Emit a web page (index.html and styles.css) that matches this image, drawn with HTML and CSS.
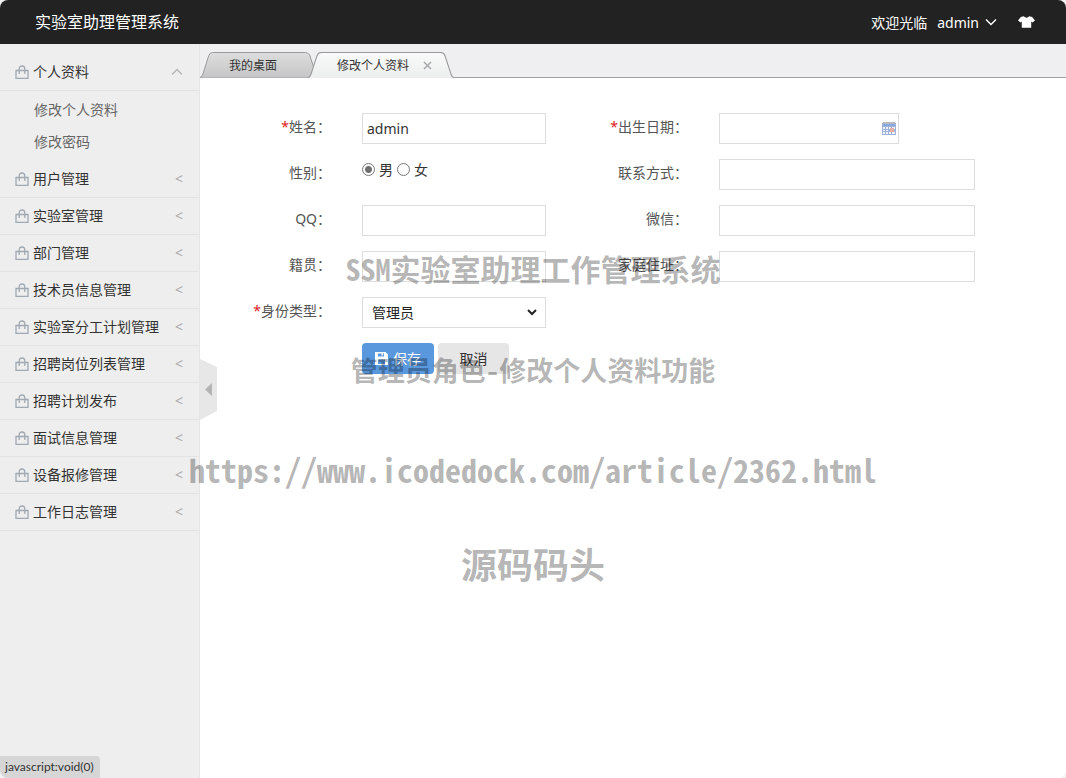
FILE: index.html
```html
<!DOCTYPE html>
<html lang="zh-CN">
<head>
<meta charset="utf-8">
<title>实验室助理管理系统</title>
<link rel="stylesheet" href="styles.css">
</head>
<body>
<svg class="defs" aria-hidden="true">
  <symbol id="bag" viewBox="0 0 14 14"><path d="M1 5.500h12v7.800H1zM4.200 9V4Q4.200 1 7 1t2.800 3v5" fill="none" stroke="#a0a9b2" stroke-width="1.300"/></symbol>
</svg>
<div class="app">
  <header class="topbar">
    <h1 class="brand">实验室助理管理系统</h1>
    <div class="user">
      <span>欢迎光临</span>
      <button class="account" type="button">admin
        <svg width="12" height="8" viewBox="0 0 12 8" aria-hidden="true"><path d="M1 1.500 6 6.500l5-5" fill="none" stroke="#fff" stroke-width="1.400"/></svg>
      </button>
      <button class="skin" type="button" aria-label="换肤">
        <svg width="17" height="12" viewBox="0 0 18 12" aria-hidden="true"><path d="M6 0Q9 3 12 0l3 .8 3 3.600-2.700 2.100L14 5.400V12H4V5.400L2.700 6.500 0 4.400 3 .8z" fill="#fff"/></svg>
      </button>
    </div>
  </header>
  <div class="body">
    <nav class="sidebar">
      <button class="item" type="button"><svg class="bag"><use href="#bag"/></svg><span class="name">个人资料</span><svg class="up" width="12" height="8" viewBox="0 0 12 8"><path d="M1 6.500 6 1.500l5 5" fill="none" stroke="#b4b4b4" stroke-width="1.300"/></svg></button>
      <ul class="sub">
        <li><a href="#profile">修改个人资料</a></li>
        <li><a href="#password">修改密码</a></li>
      </ul>
      <button class="item" type="button"><svg class="bag"><use href="#bag"/></svg><span class="name">用户管理</span><span class="more">&lt;</span></button>
      <button class="item" type="button"><svg class="bag"><use href="#bag"/></svg><span class="name">实验室管理</span><span class="more">&lt;</span></button>
      <button class="item" type="button"><svg class="bag"><use href="#bag"/></svg><span class="name">部门管理</span><span class="more">&lt;</span></button>
      <button class="item" type="button"><svg class="bag"><use href="#bag"/></svg><span class="name">技术员信息管理</span><span class="more">&lt;</span></button>
      <button class="item" type="button"><svg class="bag"><use href="#bag"/></svg><span class="name">实验室分工计划管理</span><span class="more">&lt;</span></button>
      <button class="item" type="button"><svg class="bag"><use href="#bag"/></svg><span class="name">招聘岗位列表管理</span><span class="more">&lt;</span></button>
      <button class="item" type="button"><svg class="bag"><use href="#bag"/></svg><span class="name">招聘计划发布</span><span class="more">&lt;</span></button>
      <button class="item" type="button"><svg class="bag"><use href="#bag"/></svg><span class="name">面试信息管理</span><span class="more">&lt;</span></button>
      <button class="item" type="button"><svg class="bag"><use href="#bag"/></svg><span class="name">设备报修管理</span><span class="more">&lt;</span></button>
      <button class="item" type="button"><svg class="bag"><use href="#bag"/></svg><span class="name">工作日志管理</span><span class="more">&lt;</span></button>
    </nav>
    <main class="main">
      <div class="tabs">
        <div class="tab">
          <svg class="shape" viewBox="0 0 120 26" preserveAspectRatio="none" aria-hidden="true"><defs><linearGradient id="g1" x2="0" y2="1"><stop stop-color="#dcdddc"/><stop offset="1" stop-color="#c6c6c8"/></linearGradient></defs><path d="M0 25.500Q2 25 3 22L9 3.500Q10 .5 13 .5H108Q111 .5 112.500 3L120 25.500" fill="url(#g1)" stroke="#999"/></svg>
          <a class="tab-name" href="#desktop">我的桌面</a>
        </div>
        <div class="tab active">
          <svg class="shape" viewBox="0 0 144 26" preserveAspectRatio="none" aria-hidden="true"><defs><linearGradient id="g2" x2="0" y2="1"><stop stop-color="#fafafa"/><stop offset="1" stop-color="#eceeee"/></linearGradient></defs><path d="M0 26Q2 25 3 22L9 3.500Q10 .5 13 .5H131Q134 .5 135 3.500L141 22Q142 25 144 26" fill="url(#g2)" stroke="#999"/></svg>
          <a class="tab-name" href="#profile">修改个人资料</a>
          <button class="close" type="button" aria-label="关闭"><svg width="9" height="9" viewBox="0 0 9 9"><path d="m1 1 7 7m0-7L1 8" stroke="#a8abad" stroke-width="1.500"/></svg></button>
        </div>
      </div>
      <form class="form">
        <label class="label" for="name"><span class="req">*</span>姓名：</label>
        <div class="field"><input class="text" id="name" type="text" value="admin"></div>
        <label class="label" for="birth"><span class="req">*</span>出生日期：</label>
        <div class="field"><div class="date"><input class="date-input" id="birth" type="text"><svg width="14" height="13" viewBox="0 0 14 13" aria-hidden="true"><path d="M0 1h14v12H0z" fill="#9fb2d8"/><path d="M1 0h12v2H1z" fill="#b9b9bd"/><path d="M1 2h12v2H1z" fill="#85a9e2"/><path d="M1 5h2v2H1zM4 5h2v2H4zM7 5h2v2H7zM10 5h3v2h-3zM1 8h2v1H1zM4 8h2v1H4zM1 10h2v2H1zM4 10h2v2H4zM7 10h2v2H7zM10 10h3v2h-3z" fill="#edf2fc"/><path d="M8 6h4v4H8z" fill="#e9b0aa"/></svg></div></div>

        <span class="label" id="sex">性别：</span>
        <div class="field radios" role="radiogroup" aria-labelledby="sex">
          <label class="radio"><input type="radio" name="sex" checked>男</label>
          <label class="radio"><input type="radio" name="sex">女</label>
        </div>
        <label class="label" for="phone">联系方式：</label>
        <div class="field"><input class="text wide" id="phone" type="text"></div>

        <label class="label" for="qq">QQ：</label>
        <div class="field"><input class="text" id="qq" type="text"></div>
        <label class="label" for="wechat">微信：</label>
        <div class="field"><input class="text wide" id="wechat" type="text"></div>

        <label class="label" for="native">籍贯：</label>
        <div class="field"><input class="text" id="native" type="text"></div>
        <label class="label" for="address">家庭住址：</label>
        <div class="field"><input class="text wide" id="address" type="text"></div>

        <label class="label" for="role"><span class="req">*</span>身份类型：</label>
        <div class="field"><div class="picker"><select class="text select" id="role"><option>管理员</option></select><svg class="arrow" width="10" height="7" viewBox="0 0 10 7" aria-hidden="true"><path d="m1 1 4 4 4-4" fill="none" stroke="#222" stroke-width="2"/></svg></div></div>

        <div class="field actions">
          <button class="btn primary" type="button"><svg width="13" height="13" viewBox="0 0 13 13" aria-hidden="true"><path fill-rule="evenodd" d="M0 0h10.500L13 2.500V13H0zM3 1.500v3h6v-3zM3 7.500V12h7V7.500z" fill="#fff"/><path d="M6.500 1.500H8v2H6.500z" fill="#fff"/></svg>保存</button>
          <button class="btn" type="button">取消</button>
        </div>
      </form>
      <button class="handle" type="button" aria-label="收起菜单"><svg width="17" height="61" viewBox="0 0 17 61"><path d="M0 0 17 8V52L0 61z" fill="#e7e7e7"/><path d="M12 24v13l-7-6.500z" fill="#b4b4b4"/></svg></button>
    </main>
  </div>
  <div class="status">javascript:void(0)</div>
  <div class="marks">
    <p class="mark first"><span class="latin">SSM</span>实验室助理工作管理系统</p>
    <p class="mark second">管理员角色<span class="dash">-</span>修改个人资料功能</p>
    <p class="mark url">https://www.icodedock.com/article/2362.html</p>
    <p class="mark source">源码码头</p>
  </div>
</div>
</body>
</html>
```
FILE: styles.css
```css
* { box-sizing: border-box; }
body {
  margin: 0;
  background: #f3f3f3;
  color: #333;
  font: 14px/21px "Noto Sans", "Noto Sans CJK SC", sans-serif;
}
button, input, select { font: inherit; color: inherit; margin: 0; }
button { border: 0; padding: 0; background: none; cursor: pointer; }
a { color: inherit; text-decoration: none; }
svg { flex: none; }
.defs { display: none; }
.app {
  position: relative;
  display: flex;
  flex-direction: column;
  min-height: 100vh;
  overflow: hidden;
  border-radius: 8px;
  background: #fff;
}
.topbar {
  display: flex;
  align-items: center;
  justify-content: space-between;
  height: 44px;
  padding: 0 31px 0 35px;
  background: #222;
  color: #fff;
}
.brand { margin: 0; font-size: 16px; font-weight: 400; line-height: 24px; }
.user { display: flex; align-items: center; gap: 10px; }
.account { display: flex; align-items: center; gap: 6px; }
.skin { display: flex; margin-left: 11px; }

.body { display: flex; flex: 1; }
.sidebar {
  width: 200px;
  flex: none;
  padding-top: 10px;
  border-right: 1px solid #e5e5e5;
  background: #eee;
}
.item {
  display: flex;
  align-items: center;
  gap: 4px;
  width: 100%;
  height: 37px;
  padding: 0 16px 0 15px;
  border-bottom: 1px solid #e3e3e3;
  text-align: left;
}
.item .name, .item .more { padding-bottom: 1px; }
.bag { width: 14px; height: 14px; }
.name { flex: 1; }
.more { color: #aaa; }
.sub { margin: 0; padding: 3px 0 3px 34px; list-style: none; color: #666; }
.sub a { display: block; line-height: 32px; }

.main { position: relative; flex: 1; min-width: 0; }
.tabs {
  display: flex;
  align-items: flex-end;
  height: 34px;
  border-bottom: 1px solid #a1a1a1;
  background: #efeef0;
  font-size: 12px;
}
.tab {
  position: relative;
  display: flex;
  align-items: center;
  height: 26px;
  margin-bottom: -1px;
  padding: 0 40px 0 29px;
}
.tab.active { margin-left: -9px; padding: 0 22px 0 29px; }
.shape { position: absolute; inset: 0; width: 100%; height: 100%; }
.tab-name, .close { position: relative; }
.close { display: flex; margin-left: 14px; }

.form {
  display: grid;
  grid-template-columns: 131fr 226fr 131fr 378fr;
  grid-auto-rows: 31px;
  row-gap: 15px;
  padding-top: 35px;
}
.label { line-height: 28px; text-align: right; color: #555; white-space: nowrap; }
.req { color: #d22; }
.field { padding-left: 31px; }
.text {
  display: block;
  width: 184px;
  height: 31px;
  padding: 4px;
  border: 1px solid #ddd;
  border-radius: 0;
  background: #fff;
}
.wide { width: 256px; }
.picker { position: relative; width: 184px; }
.select { padding: 4px 9px; color: #222; appearance: none; }
.arrow { position: absolute; right: 9px; top: 12px; pointer-events: none; }
.date {
  display: flex;
  align-items: center;
  width: 180px;
  height: 31px;
  padding-right: 2px;
  border: 1px solid #ddd;
}
.date-input { flex: 1; min-width: 0; height: 100%; padding: 4px; border: 0; background: none; }
.radios { display: flex; align-items: flex-start; gap: 4px; }
.radio { display: flex; align-items: center; gap: 4px; }
.radio input {
  appearance: none;
  width: 13px;
  height: 13px;
  border: 1px solid #767676;
  border-radius: 50%;
}
.radio input:checked { background: radial-gradient(circle, #707070 3px, #fff 4px); }
.actions { grid-column: 2; grid-row: 6; display: flex; gap: 4px; }
.btn {
  display: flex;
  align-items: center;
  justify-content: center;
  gap: 5px;
  width: 71px;
  height: 31px;
  border-radius: 4px;
  background: #e6e6e6;
}
.primary { width: 72px; background: #5a98de; color: #fff; }
.handle { position: absolute; left: 0; top: 315px; display: flex; }

.status {
  position: absolute;
  left: 0;
  bottom: 0;
  padding: 2px 6px 2px 5px;
  border-radius: 0 4px 0 0;
  background: #d6d6d6;
  font-family: Lato, sans-serif;
  font-size: 12px;
  line-height: 18px;
}
.marks {
  position: absolute;
  inset: 0;
  display: flex;
  flex-direction: column;
  align-items: center;
  gap: 60px;
  padding-top: 248px;
  color: rgba(0, 0, 0, 0.3);
  font-family: "Noto Sans CJK SC", sans-serif;
  font-weight: 700;
  pointer-events: none;
}
.mark { margin: 0; line-height: 40px; white-space: nowrap; }
.latin, .dash, .url { font-family: "Noto Sans Mono CJK SC", "DejaVu Sans Mono", monospace; }
.latin, .dash { line-height: 1; }
.first { font-size: 30px; }
.second { font-size: 27px; line-height: 44px; }
.url { font-size: 32px; line-height: 34px; }
.source { font-size: 36px; line-height: 34px; }
```
